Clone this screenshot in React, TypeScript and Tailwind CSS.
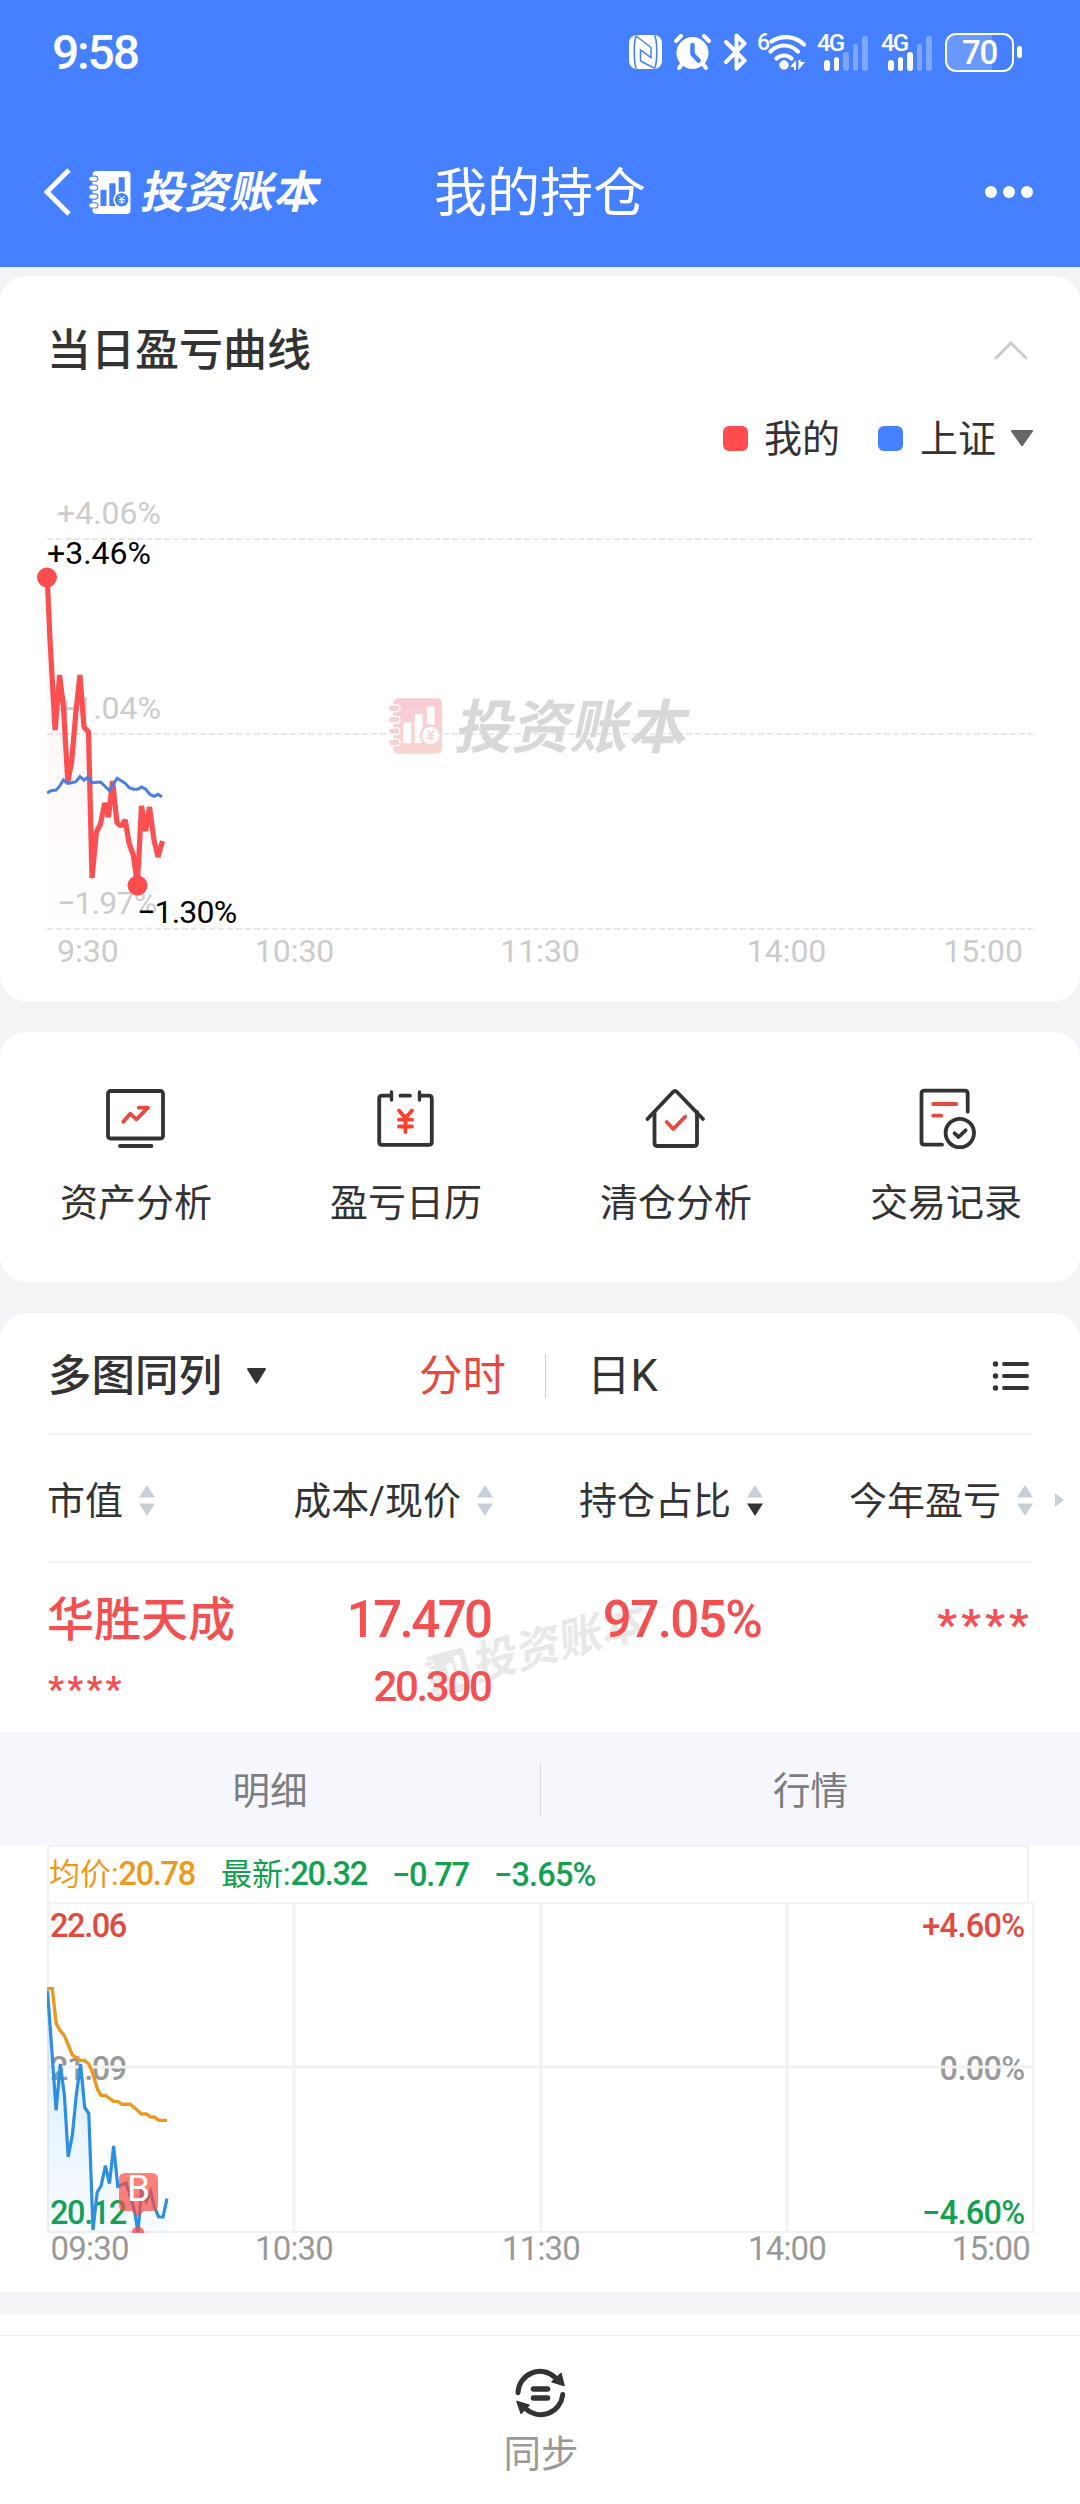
import { ReactNode } from 'react';

const FONT = 'font-[Roboto,"Noto_Sans_CJK_SC",sans-serif]';

const myCurve: [number, number][] = [
  [47.2, 97], [50, 160], [55.1, 250], [59.6, 195], [63.5, 227], [67.8, 302], [71.6, 282],
  [75.8, 233], [79.9, 195], [84, 247], [88.5, 252], [92, 398], [96.4, 352], [100.5, 344],
  [104.7, 323], [108.5, 337], [112.6, 301], [117, 343], [121.2, 346], [125.3, 340],
  [129, 363], [133.3, 375], [137.4, 405], [141.5, 326], [145.7, 351], [149.5, 327],
  [154, 360], [158, 377], [162.5, 361],
];

const indexCurve: [number, number][] = [
  [47.2, 313], [51, 310.7], [56.1, 310], [59.2, 306.7], [63.4, 300], [67.5, 303.3],
  [71.6, 302.7], [75.8, 301.7], [79.9, 296.7], [84, 300], [88.2, 297], [92.3, 302.7],
  [100.6, 302], [109.5, 310.7], [117.1, 298.3], [121.2, 300.7], [125.3, 303.3],
  [129.5, 308], [133.6, 309.3], [137.7, 309.3], [141.5, 307], [145.7, 309.3],
  [149.8, 314.3], [153.9, 316.3], [158.1, 314.3], [161.8, 317],
];

const avgLine: [number, number][] = [
  [0, 86.6], [5.3, 86.6], [9.1, 120.9], [12.2, 127.3], [17.4, 133.7], [25.3, 153],
  [33.2, 158.4], [37.7, 158.4], [41.8, 162], [45.3, 170], [50.5, 187], [53.9, 193.4],
  [58.4, 193.4], [66.6, 199.4], [70.8, 199.4], [74.9, 202.3], [83.2, 202.3],
  [87.3, 205.5], [94.5, 212], [99.4, 212], [103.5, 215], [107.3, 215], [111.7, 218.4],
  [120, 218.4],
];

const priceLine: [number, number][] = [
  [0.5, 88.7], [4.7, 146], [9.1, 208.4], [13.3, 162], [17.4, 193.4], [21.2, 254.8],
  [25.3, 233.4], [29.4, 192], [33.6, 162], [37.7, 205.5], [41.8, 211.6], [46, 328],
  [50.1, 290.5], [54.2, 283.4], [58.4, 263.7], [62.5, 281.6], [66.6, 244], [70.8, 284.4],
  [79, 281], [82.5, 292], [87.3, 308], [91, 330], [94.5, 289], [99.4, 299.4],
  [103.5, 289], [107.3, 305], [111.7, 315], [116, 315], [120, 296.6],
];

const toPoints = (points: [number, number][]) => points.map((p) => p.join(',')).join(' ');

interface LogoMarkProps {
  className: string;
  fill?: string;
  hole?: string;
}

function LogoMark({ className, fill = 'currentColor', hole = '#fff' }: LogoMarkProps) {
  return (
    <svg viewBox="0 0 42 43" className={className}>
      <defs>
        <linearGradient id="logoPink" x1="0" y1="0" x2="0" y2="1">
          <stop offset="0" stopColor="#f9cbd5" />
          <stop offset="1" stopColor="#f8d5cf" />
        </linearGradient>
      </defs>
      <rect x="4" y="0" width="38" height="43" rx="4" fill={fill} />
      {[7.7, 16.6, 25.5, 34.4].map((y) => (
        <rect key={y} x="0.3" y={y - 2.6} width="9" height="5.2" rx="2.6" fill={fill} stroke={hole} strokeWidth="1.1" />
      ))}
      <g fill={hole}>
        <rect x="12" y="18.7" width="6" height="16.3" rx="0.8" />
        <rect x="20.8" y="12.3" width="6.2" height="22.7" rx="0.8" />
        <rect x="30.2" y="6.3" width="6" height="15" rx="0.8" />
      </g>
      <circle cx="33.2" cy="28.8" r="7.6" fill={hole} stroke={fill} strokeWidth="1.6" />
      <path d="M30.6 25l2.6 3 2.6-3M33.2 28v5M30.2 28.6h6M30.2 31h6" fill="none" stroke={fill} strokeWidth="1.1" />
    </svg>
  );
}

function SignalIcon({ level }: { level: number }) {
  const bars = [11, 14.5, 19, 27, 35];
  return (
    <div className="relative w-[50px] h-[38px]">
      <span className="absolute left-0 top-[-1px] text-[24px] leading-[23px] font-medium tracking-[-0.08em]">4G</span>
      <div className="absolute left-[7px] bottom-0 flex items-end gap-[4px]">
        {bars.map((h, i) => (
          <span
            key={h}
            className={i < level ? 'w-[5.5px] rounded-full bg-white' : 'w-[5.5px] rounded-full bg-white/30'}
            style={{ height: h }}
          />
        ))}
      </div>
    </div>
  );
}

function StatusBar() {
  return (
    <div className="flex items-center h-[104px] pl-[52px] pr-[58px]">
      <span className="pt-[2px] text-[48px] leading-[48px] font-medium tracking-[-0.045em]">9:58</span>
      <div className="ml-auto flex items-center">
        <svg viewBox="0 0 33 34" className="w-[33px] h-[34px]">
          <rect width="33" height="34" rx="8" fill="#fff" />
          <path d="M7.500 0.5c-3 4-3 28 0 33M25.500 0.5c3 4 3 28 0 33" fill="none" stroke="#4480ff" strokeWidth="1.6" />
          <path d="M7 1L22 12.500V22.500L11.500 15V26L25 33" fill="none" stroke="#4480ff" strokeWidth="1.500" />
        </svg>
        <svg viewBox="0 0 37 36" className="ml-[12px] w-[37px] h-[36px]" fill="none" strokeLinecap="round">
          <circle cx="18.5" cy="19" r="16" fill="#fff" />
          <path d="M2 7l5-5M35 7l-5-5M8 30l-3 4M29 30l3 4" stroke="#fff" strokeWidth="4" />
          <path d="M18.5 11v9l6 6.5" stroke="#4480ff" strokeWidth="4.5" strokeLinejoin="round" />
        </svg>
        <svg viewBox="0 0 23 38" className="ml-[13px] w-[23px] h-[38px]" fill="none" stroke="#fff" strokeWidth="4" strokeLinecap="round" strokeLinejoin="round">
          <path d="M2 9l18.5 18.5L12.500 35.500V2.500L20.500 10.500L2 29" />
        </svg>
        <div className="relative ml-[10px] w-[50px] h-[38px]">
          <span className="absolute left-0 top-[-2px] text-[23px] leading-[23px] font-medium">6</span>
          <svg viewBox="0 0 40 38" className="absolute left-[11px] top-0 w-[40px] h-[38px]" fill="none" stroke="#fff" strokeWidth="4.2" strokeLinecap="round">
            <path d="M3.500 8.500C12 2.500 26 2 36 11.500" />
            <path d="M2.500 18.500C10 10.500 22 10.500 30 18.500" />
            <path d="M8.500 25.500C12.500 21.500 19.500 21.500 23.500 25.500" />
            <circle cx="16" cy="32" r="4.700" fill="#fff" stroke="none" />
            <path d="M28 27v10h-2v-3h-4zM30.500 37V27h2v2h4.500z" fill="#fff" stroke="none" />
          </svg>
        </div>
        <div className="ml-[10px]">
          <SignalIcon level={2} />
        </div>
        <div className="ml-[14px]">
          <SignalIcon level={3} />
        </div>
        <div className="relative ml-[14px] w-[69px] h-[39px] rounded-[11px] border-[2.5px] border-white overflow-hidden flex items-center justify-center">
          <span className="absolute inset-y-0 left-0 w-[45px] bg-white/20" />
          <span className="relative pt-[2px] text-[33px] leading-[34px] font-medium tracking-[-0.04em]">70</span>
        </div>
        <span className="ml-[3px] w-[5px] h-[12px] rounded-[2px] bg-white" />
      </div>
    </div>
  );
}

function Header() {
  return (
    <header className="h-[267px] bg-[#4480ff] text-white">
      <StatusBar />
      <div className="relative flex items-center h-[176px] pl-[43px] pr-[47px]">
        <svg viewBox="0 0 28 48" className="w-[28px] h-[48px]" fill="none" stroke="#fff" strokeWidth="4.800">
          <path d="M26 2L4 24l22 22" />
        </svg>
        <LogoMark className="ml-[17px] w-[43px] h-[43px]" hole="#4480ff" />
        <span className="ml-[12px] pt-[2px] text-[44.5px] leading-[48px] font-bold -skew-x-12">投资账本</span>
        <h1 className="absolute inset-x-0 pt-[4px] text-center text-[53px] leading-[60px] pointer-events-none">我的持仓</h1>
        <div className="ml-auto flex gap-[6px]">
          <span className="size-[12px] rounded-full bg-white" />
          <span className="size-[12px] rounded-full bg-white" />
          <span className="size-[12px] rounded-full bg-white" />
        </div>
      </div>
    </header>
  );
}

function ProfitCurve() {
  const area = `47,449 ${toPoints(myCurve)} 162,449`;

  return (
    <section className="mt-[9px] h-[725px] rounded-[26px] bg-white">
      <div className="flex items-center justify-between h-[146px] pl-[47px] pr-[52px]">
        <h2 className="pt-[4px] text-[44px] leading-[48px] font-medium">当日盈亏曲线</h2>
        <svg viewBox="0 0 34 20" className="mt-[2px] w-[34px] h-[20px]" fill="none" stroke="#ccc" strokeWidth="3" strokeLinecap="round">
          <path d="M2 18L17 3l15 15" />
        </svg>
      </div>
      <div className="flex items-center justify-end h-[32px] pr-[47px] text-[38px] leading-[40px]">
        <span className="size-[25px] rounded-[6px] bg-[#fd4d4f]" />
        <span className="ml-[16px] pt-[2px]">我的</span>
        <span className="ml-[38px] size-[25px] rounded-[6px] bg-[#4480ff]" />
        <span className="ml-[17px] pt-[2px]">上证</span>
        <svg viewBox="0 0 22 16" className="ml-[15px] w-[22px] h-[16px]">
          <path d="M1 0h20q2 0 0.500 2L12 15.500q-1 1-2 0L0.500 2Q-1 0 1 0z" fill="#666" />
        </svg>
      </div>
      <div className="relative mt-[26px]">
        <svg viewBox="0 0 1080 510" className="block w-full h-[510px]">
          <defs>
            <linearGradient id="profitFill" x1="0" y1="0" x2="0" y2="1">
              <stop offset="0" stopColor="#fd4d4f" stopOpacity="0.08" />
              <stop offset="1" stopColor="#fd4d4f" stopOpacity="0" />
            </linearGradient>
          </defs>
          <g stroke="#e9e9e9" strokeWidth="2" strokeDasharray="6 3">
            <path d="M47 59H1033M47 254H1033M47 449H1033" />
          </g>
          <g fontSize="32" fill="#ccc">
            <text x="57" y="44">+4.06%</text>
            <text x="57" y="239">+1.04%</text>
            <text x="57" y="434" letterSpacing="-0.800">−1.97%</text>
            <text x="57" y="482">9:30</text>
            <text x="294.500" y="482" textAnchor="middle">10:30</text>
            <text x="540" y="482" textAnchor="middle">11:30</text>
            <text x="786.500" y="482" textAnchor="middle">14:00</text>
            <text x="1023" y="482" textAnchor="end">15:00</text>
          </g>
          <polygon points={area} fill="url(#profitFill)" />
          <polyline points={toPoints(myCurve)} fill="none" stroke="#fb4f51" strokeWidth="5.200" strokeLinejoin="bevel" />
          <polyline points={toPoints(indexCurve)} fill="none" stroke="#4a7fe6" strokeWidth="3" />
          <circle cx="47" cy="97.500" r="10" fill="#fd4d4f" />
          <circle cx="137.500" cy="405.500" r="10" fill="#fd4d4f" />
          <g fontSize="32" fill="#000">
            <text x="47" y="84">+3.46%</text>
            <text x="137" y="443" letterSpacing="-0.800">−1.30%</text>
          </g>
        </svg>
        <div className="absolute left-[388px] top-[214px] flex items-center h-[64px] text-[#d8d8d8]">
          <LogoMark className="w-[54px] h-[56px]" fill="url(#logoPink)" />
          <span className="ml-[16px] pt-[4px] text-[58px] leading-[64px] font-bold -skew-x-12">投资账本</span>
        </div>
      </div>
    </section>
  );
}

function MonitorIcon() {
  return (
    <>
      <rect x="3" y="3" width="55" height="47.500" rx="2.500" />
      <path d="M15 58h31.500" />
      <path stroke="#e94a3f" d="M18.300 33.700l6.900-8 6.200 5.600L43 19.700h-9.200" />
    </>
  );
}

function CalendarIcon() {
  return (
    <>
      <path d="M15 7.700H7.200q-3 0-3 3v43.600q0 2.500 3 2.500h46.600q3 0 3-2.500V10.700q0-3-3-3H46M25.500 7.700h9.500" />
      <path d="M16.500 4v8M44.500 4v8" strokeWidth="3.400" />
      <path stroke="#fa4032" d="M24 22.500l6.500 7.500 6.500-7.500M30.500 30v14M24 31.700h13M24 38.500h13" />
    </>
  );
}

function HouseIcon() {
  return (
    <>
      <path d="M2.500 31L28 4q2-2 4 0l26 27" />
      <path d="M9.500 24v31q0 3 3 3h36.500q3 0 3-3V24" />
      <path stroke="#e94a3f" d="M21.700 34l6.600 7 12-12.300" />
    </>
  );
}

function RecordIcon() {
  return (
    <>
      <path d="M27 56.700H9.500q-3 0-3-3v-48q0-3 3-3h40.200q3 0 3 3v18" />
      <circle cx="44.800" cy="45" r="14.200" />
      <path d="M39.600 45.300l4 3.700 7-6.700" />
      <path stroke="#e94a3f" d="M18.200 16h23M18.200 27.700h8" />
    </>
  );
}

const shortcuts: { label: string; icon: ReactNode }[] = [
  { label: '资产分析', icon: <MonitorIcon /> },
  { label: '盈亏日历', icon: <CalendarIcon /> },
  { label: '清仓分析', icon: <HouseIcon /> },
  { label: '交易记录', icon: <RecordIcon /> },
];

function Shortcuts() {
  return (
    <section className="mt-[31px] grid grid-cols-4 h-[250px] rounded-[26px] bg-white">
      {shortcuts.map((item) => (
        <div key={item.label} className="flex flex-col items-center pt-[56px]">
          <svg viewBox="0 0 60 60" className="w-[60px] h-[60px] overflow-visible" fill="none" stroke="#333" strokeWidth="3.800" strokeLinecap="round" strokeLinejoin="round">
            {item.icon}
          </svg>
          <span className="mt-[33px] pl-[2px] text-[38px] leading-[44px]">{item.label}</span>
        </div>
      ))}
    </section>
  );
}

function SortIcon({ desc = false }: { desc?: boolean }) {
  return (
    <svg viewBox="0 0 16 31" className="ml-[16px] w-[16px] h-[31px]" fill="#c6cfd8">
      <path d="M8 0l8 12.500H0z" />
      <path d="M8 31l8-12.500H0z" fill={desc ? '#333' : '#c6cfd8'} />
    </svg>
  );
}

function StockChart() {
  return (
    <div className="ml-[47px]">
      <div className="flex items-center w-[982px] h-[57px] border-2 border-b-0 border-[#f2f2f2] text-[31px] leading-[40px] text-[#12a150]">
        <span className="text-[#ec9a1e]">
          均价:<b className="font-medium text-[32.5px] tracking-[-0.04em]">20.78</b>
        </span>
        <span className="ml-[26px]">
          最新:<b className="font-medium text-[32.5px] tracking-[-0.04em]">20.32</b>
        </span>
        <b className="ml-[25px] font-medium text-[32.5px] tracking-[-0.035em]">−0.77</b>
        <b className="ml-[25px] font-medium text-[32.5px] tracking-[-0.025em]">−3.65%</b>
      </div>
      <svg viewBox="0 0 987 390" className="block w-[987px] h-[390px]">
        <defs>
          <linearGradient id="priceFill" x1="0" y1="0" x2="0" y2="1">
            <stop offset="0" stopColor="#2b95ea" stopOpacity="0.2" />
            <stop offset="1" stopColor="#2b95ea" stopOpacity="0.03" />
          </linearGradient>
          <clipPath id="plot">
            <rect x="0" y="0" width="987" height="331" />
          </clipPath>
        </defs>
        <g fontSize="32.500" fontWeight="500" letterSpacing="-1.400">
          <text x="3" y="34.500" fill="#e24a3f">22.06</text>
          <text x="3" y="177.500" fill="#999">21.09</text>
          <text x="977.500" y="34.500" fill="#e24a3f" textAnchor="end" letterSpacing="-0.700">+4.60%</text>
          <text x="977.500" y="177.500" fill="#999" textAnchor="end" letterSpacing="-0.700">0.00%</text>
          <text x="977.500" y="321.500" fill="#12a150" textAnchor="end" letterSpacing="-0.700">−4.60%</text>
          <text x="3" y="321.500" fill="#12a150">20.12</text>
        </g>
        <g fill="none" stroke="#f2f2f2">
          <rect x="1" y="1" width="985" height="329" strokeWidth="2" />
          <path d="M247 0v331M494 0v331M740 0v331M0 165H987" strokeWidth="3" />
        </g>
        <g clipPath="url(#plot)">
          <polygon points={`0,331 ${toPoints(priceLine)} 120,331`} fill="url(#priceFill)" />
          <polyline points={toPoints(priceLine)} fill="none" stroke="#2b90e4" strokeWidth="3.200" />
          <circle cx="91" cy="331" r="6.500" fill="#fb4a40" fillOpacity="0.75" />
        </g>
        <polyline points={toPoints(avgLine)} fill="none" stroke="#ea991f" strokeWidth="3.400" />
        <path d="M78 271h27q6 0 6 6v26q0 6-6 6h-8l-6 6-6-6h-7q-6 0-6-6v-26q0-6 6-6z" fill="#fd4a40" fillOpacity="0.7" />
        <text x="91.500" y="299" textAnchor="middle" fontSize="37" fill="#fff">B</text>
        <g fontSize="33" fill="#999" letterSpacing="-0.8">
          <text x="3.500" y="358">09:30</text>
          <text x="247" y="358" textAnchor="middle">10:30</text>
          <text x="494" y="358" textAnchor="middle">11:30</text>
          <text x="740" y="358" textAnchor="middle">14:00</text>
          <text x="983" y="358" textAnchor="end">15:00</text>
        </g>
      </svg>
    </div>
  );
}

function Holdings() {
  return (
    <section className="mt-[31px] h-[979px] rounded-t-[26px] bg-white">
      <div className="mx-[47px] flex items-center h-[122px] pt-[6px] border-b-2 border-[#f4f4f4] text-[43.5px] leading-[48px]">
        <span className="ml-px pt-[2px] font-medium">多图同列</span>
        <svg viewBox="0 0 19 16" className="ml-[25px] w-[19px] h-[16px]">
          <path d="M1 0h17q1.500 0 0.500 2l-8 13q-1 1.500-2 0L0.500 2Q-0.500 0 1 0z" fill="#333" />
        </svg>
        <span className="ml-[153px] pt-[2px] text-[#e64a3e]">分时</span>
        <span className="ml-[39px] w-px h-[44px] bg-[#ccc]" />
        <span className="ml-[41px] pt-[2px]">日K</span>
        <svg viewBox="0 0 38 32" className="ml-auto mr-[3px] w-[38px] h-[32px]" stroke="#333" strokeWidth="4" strokeLinecap="round">
          <path d="M3.500 4h0.010M3.500 16h0.010M3.500 28h0.010" strokeWidth="5.500" />
          <path d="M12 4h23M12 16h23M12 28h23" />
        </svg>
      </div>
      <div className="relative mx-[47px] flex items-center h-[128px] pt-[4px] border-b-2 border-[#f4f4f4] text-[38px] leading-[46px]">
        <div className="flex w-[176px] items-center"><span className="pt-[2px]">市值</span><SortIcon /></div>
        <div className="flex w-[270px] items-center justify-end"><span className="pt-[2px]">成本/现价</span><SortIcon /></div>
        <div className="flex w-[270px] items-center justify-end"><span className="pt-[2px]">持仓占比</span><SortIcon desc /></div>
        <div className="flex w-[270px] items-center justify-end"><span className="pt-[2px]">今年盈亏</span><SortIcon /></div>
        <svg viewBox="0 0 9 14" className="absolute -right-[31px] w-[9px] h-[14px]" fill="#c6cfd8">
          <path d="M0 0l9 7-9 7z" />
        </svg>
      </div>
      <div className="relative flex h-[169px] px-[47px] pt-[29px] font-medium text-[#f35052]">
        <div className="absolute left-[424px] top-[61px] flex items-center -rotate-[15deg] text-[#e8e8e8]">
          <LogoMark className="w-[42px] h-[43px]" />
          <span className="ml-[7px] text-[44px] leading-[50px] font-bold -skew-x-12">投资账本</span>
        </div>
        <div className="relative w-[206px]">
          <div className="text-[47px] leading-[56px]">华胜天成</div>
          <div className="mt-[14px] pl-px text-[35px] leading-[56px] font-bold tracking-[3.300px]">****</div>
        </div>
        <div className="relative w-[238px] text-right">
          <div className="text-[51px] leading-[56px] tracking-[-0.05em]">17.470</div>
          <div className="mt-[11px] text-[42px] leading-[56px] tracking-[-0.055em]">20.300</div>
        </div>
        <div className="relative w-[271px] text-right text-[51px] leading-[56px] tracking-[-0.03em]">97.05%</div>
        <div className="relative w-[272px] text-right text-[43px] leading-[64px] font-bold tracking-[4.400px]">****</div>
      </div>
      <div className="grid grid-cols-2 items-center h-[113px] bg-[#f6f7fc] text-center text-[37.5px] leading-[50px] text-[#7b7d82]">
        <span className="pt-[4px]">明细</span>
        <span className="border-l border-[#ddd] pt-[4px]">行情</span>
      </div>
      <StockChart />
    </section>
  );
}

function SyncBar() {
  return (
    <footer className="mt-[22px] h-[190px] bg-white">
      <div className="h-[22px] border-b border-[#ececec]" />
      <div className="flex flex-col items-center pt-[32px]">
        <svg viewBox="0 0 50 50" className="w-[50px] h-[50px]" fill="none" stroke="#333" strokeWidth="5" strokeLinecap="round">
          <path d="M3 24.700A22 22 0 0 1 40 9.300M47.700 26.500A22 22 0 0 1 11 41" />
          <path d="M46 5.500l3 12-12-3.600zM2 33.500l12 3.600-8 8z" fill="#333" strokeWidth="1.500" strokeLinejoin="round" />
          <path d="M18.500 21h14M18.500 30h14" strokeWidth="5.500" />
        </svg>
        <span className="mt-[14px] pl-[2px] text-[37.5px] leading-[44px] text-[#999]">同步</span>
      </div>
    </footer>
  );
}

export default function App() {
  return (
    <div className={`w-[1080px] h-[2504px] overflow-hidden bg-[#f3f4f6] text-[#333] ${FONT}`}>
      <Header />
      <ProfitCurve />
      <Shortcuts />
      <Holdings />
      <SyncBar />
    </div>
  );
}
